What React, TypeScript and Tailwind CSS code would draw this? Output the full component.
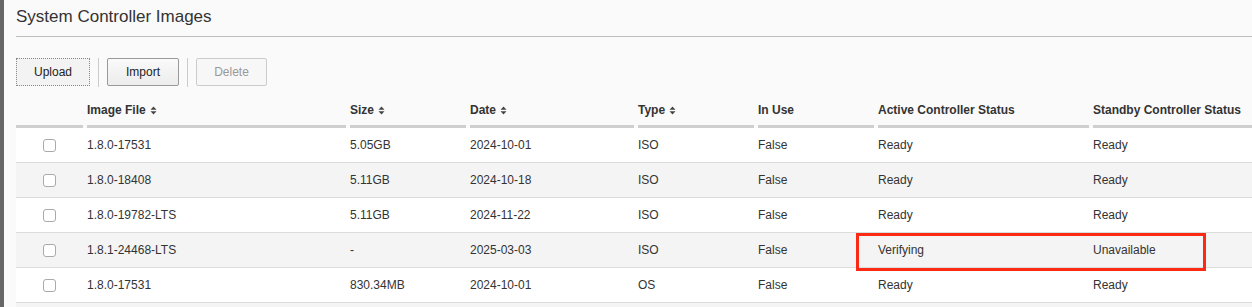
import React from "react";

const cols = "grid grid-cols-[67px_259px_116px_164px_116px_116px_211px_1fr] gap-x-[4px]";

function SortIcon() {
  return (
    <svg width="7" height="9" viewBox="0 0 7 9" className="ml-[4px] inline-block">
      <polygon points="0.5,3.8 3.5,0.5 6.5,3.8" fill="#444" />
      <polygon points="0.5,5.2 3.5,8.5 6.5,5.2" fill="#444" />
    </svg>
  );
}

type Row = [string, string, string, string, string, string, string];

const rows: Row[] = [
  ["1.8.0-17531", "5.05GB", "2024-10-01", "ISO", "False", "Ready", "Ready"],
  ["1.8.0-18408", "5.11GB", "2024-10-18", "ISO", "False", "Ready", "Ready"],
  ["1.8.0-19782-LTS", "5.11GB", "2024-11-22", "ISO", "False", "Ready", "Ready"],
  ["1.8.1-24468-LTS", "-", "2025-03-03", "ISO", "False", "Verifying", "Unavailable"],
  ["1.8.0-17531", "830.34MB", "2024-10-01", "OS", "False", "Ready", "Ready"],
];

export default function App() {
  const headers: [string, boolean][] = [
    ["", false],
    ["Image File", true],
    ["Size", true],
    ["Date", true],
    ["Type", true],
    ["In Use", false],
    ["Active Controller Status", false],
    ["Standby Controller Status", false],
  ];
  return (
    <div className="flex min-h-[307px] bg-[#fafafa] font-['Liberation_Sans',Arial,sans-serif] text-[#333]">
      <div className="w-[4px] shrink-0 bg-[#666]" />
      <div className="flex-1 pl-[12px]">
        <h1 className="h-[36px] pt-[7px] text-[17px] leading-[20px] text-[#333]">System Controller Images</h1>
        <div className="h-px bg-[#bdbdbd]" />
        <div className="mt-[21px] flex h-[28px] items-center text-[12px]">
          <button className="h-[28px] w-[74px] border border-dotted border-[#888] bg-[#f3f3f3] text-[#222]">Upload</button>
          <div className="ml-[8px] h-[29px] w-px bg-[#ccc]" />
          <button className="ml-[8px] h-[28px] w-[72px] rounded-[2px] border border-[#999] bg-gradient-to-b from-[#fafafa] to-[#ececec] text-[#222]">Import</button>
          <div className="ml-[8px] h-[29px] w-px bg-[#ccc]" />
          <button className="ml-[8px] h-[28px] w-[71px] rounded-[2px] border border-[#ccc] bg-[#f7f7f7] text-[#999]">Delete</button>
        </div>
        <div className="mt-[9px]">
          <div className={cols}>
            {headers.map(([h, s], i) => (
              <div key={i} className="flex h-[33px] items-center border-b-[3px] border-[#cfcfcf] text-[12px] font-bold text-[#333]">
                {h}
                {s && <SortIcon />}
              </div>
            ))}
          </div>
          {rows.map((r, idx) => (
            <div
              key={idx}
              className={`relative ${cols} h-[35px] items-center border-b border-[#dcdcdc] text-[12px] ${idx % 2 === 1 ? "bg-[#f4f4f4]" : "bg-white"}`}
            >
              <div className="flex justify-center">
                <div className="h-[13px] w-[13px] rounded-[3px] border border-[#aaa] bg-white" />
              </div>
              {r.map((c, j) => (
                <div key={j}>{c}</div>
              ))}
              {idx === 3 && (
                <div className="absolute left-[840px] top-0 z-10 h-[38px] w-[350px] border-[3px] border-[#fa2a14]" />
              )}
            </div>
          ))}
          <div className="h-[20px] bg-[#f4f4f4]" />
        </div>
      </div>
    </div>
  );
}
